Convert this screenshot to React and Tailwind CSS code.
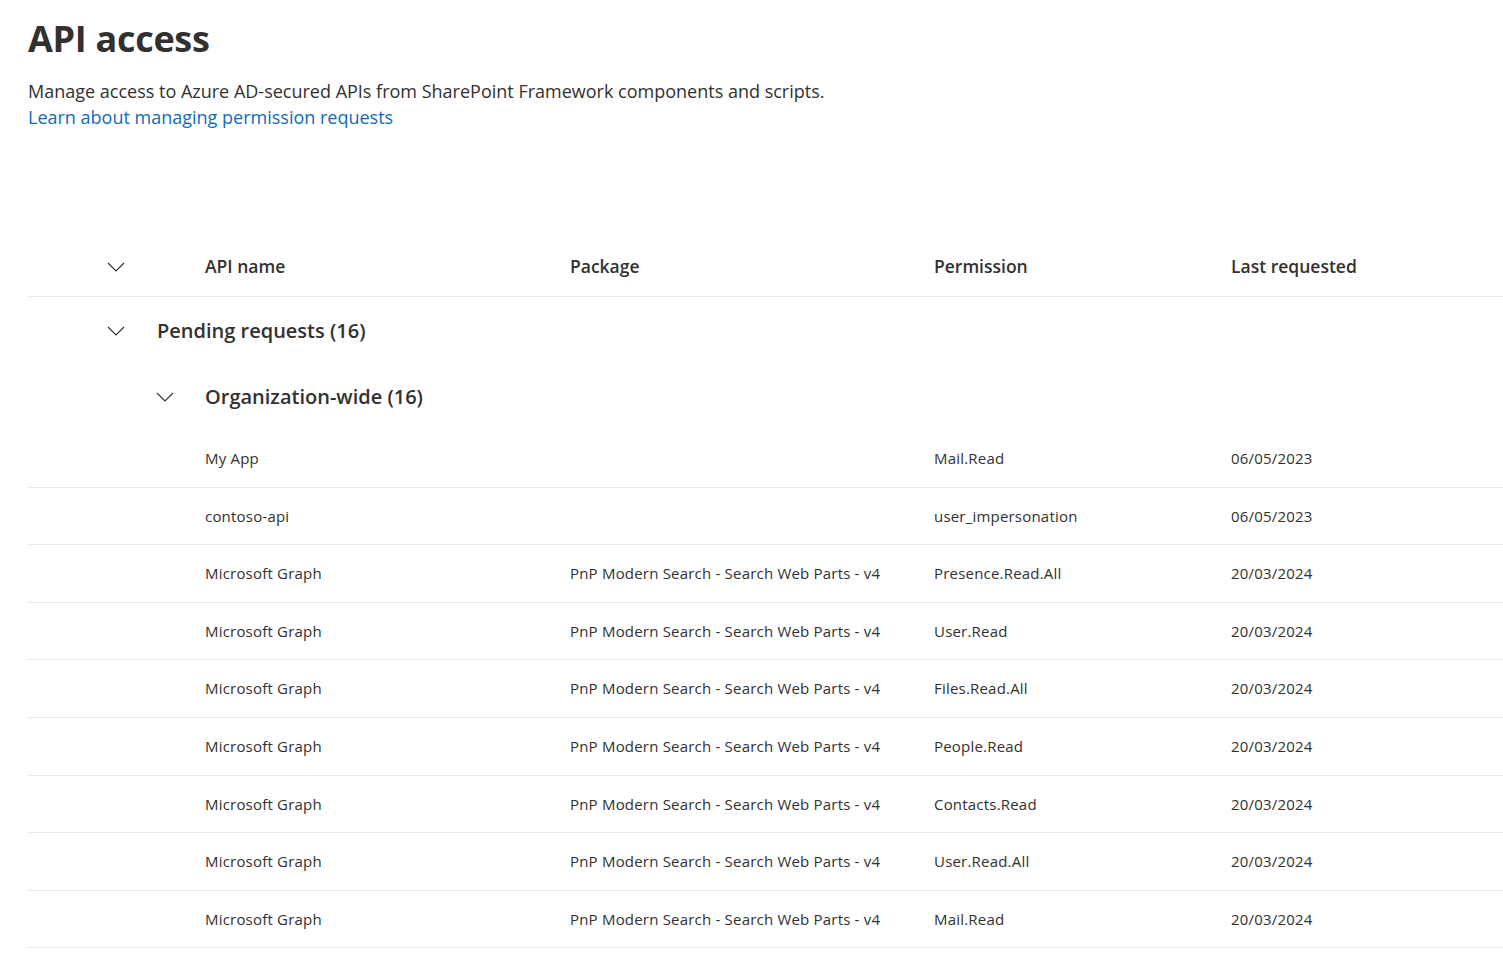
const rows = [
  { api: "My App", pkg: "", perm: "Mail.Read", date: "06/05/2023" },
  { api: "contoso-api", pkg: "", perm: "user_impersonation", date: "06/05/2023" },
  { api: "Microsoft Graph", pkg: "PnP Modern Search - Search Web Parts - v4", perm: "Presence.Read.All", date: "20/03/2024" },
  { api: "Microsoft Graph", pkg: "PnP Modern Search - Search Web Parts - v4", perm: "User.Read", date: "20/03/2024" },
  { api: "Microsoft Graph", pkg: "PnP Modern Search - Search Web Parts - v4", perm: "Files.Read.All", date: "20/03/2024" },
  { api: "Microsoft Graph", pkg: "PnP Modern Search - Search Web Parts - v4", perm: "People.Read", date: "20/03/2024" },
  { api: "Microsoft Graph", pkg: "PnP Modern Search - Search Web Parts - v4", perm: "Contacts.Read", date: "20/03/2024" },
  { api: "Microsoft Graph", pkg: "PnP Modern Search - Search Web Parts - v4", perm: "User.Read.All", date: "20/03/2024" },
  { api: "Microsoft Graph", pkg: "PnP Modern Search - Search Web Parts - v4", perm: "Mail.Read", date: "20/03/2024" },
];

const cols = "grid grid-cols-[178px_365px_364px_297px_1fr] items-center";

// thin Fluent-style chevron
const Chevron = () => (
  <svg width="18" height="10" viewBox="0 0 18 10" fill="none" className="text-[#323130]">
    <polyline points="1,1 9,9 17,1" stroke="currentColor" strokeWidth="1.1" />
  </svg>
);

export default function App() {
  return (
    <div className="min-h-screen bg-white text-[#323130] font-['Open_Sans',sans-serif] pl-[27px] overflow-hidden">
      <h1 className="pt-[16px] pl-px text-[36px] leading-[46px] font-bold tracking-[-0.3px]">API access</h1>
      <p className="mt-[16px] pl-px text-[18px] leading-[26px]">
        Manage access to Azure AD-secured APIs from SharePoint Framework components and scripts.
      </p>
      <a href="#" className="block pl-px text-[18px] leading-[26px] text-[#0f6cbd]">
        Learn about managing permission requests
      </a>

      <div className="mt-[107px]">
        <div className={`${cols} h-[60px] border-b border-[#edebe9] text-[17.5px] font-semibold`}>
          <div className="pl-[80px] flex"><Chevron /></div>
          <div>API name</div>
          <div>Package</div>
          <div>Permission</div>
          <div>Last requested</div>
        </div>

        <div className="flex items-center h-[68px]">
          <div className="w-[130px] pl-[80px] flex"><Chevron /></div>
          <span className="text-[20px] font-semibold">Pending requests (16)</span>
        </div>

        <div className="flex items-center h-[64px]">
          <div className="w-[178px] pl-[129px] flex"><Chevron /></div>
          <span className="text-[20px] font-semibold">Organization-wide (16)</span>
        </div>

        {rows.map((r, i) => (
          <div
            key={i}
            className={`${cols} h-[57.6px] text-[15px] tracking-[0.2px] ${i === 0 ? "" : "border-t"} border-[#edebe9] border-b-0`}
          >
            <div />
            <div>{r.api}</div>
            <div>{r.pkg}</div>
            <div>{r.perm}</div>
            <div>{r.date}</div>
          </div>
        ))}
        <div className="border-t border-[#edebe9]" />
      </div>
    </div>
  );
}
